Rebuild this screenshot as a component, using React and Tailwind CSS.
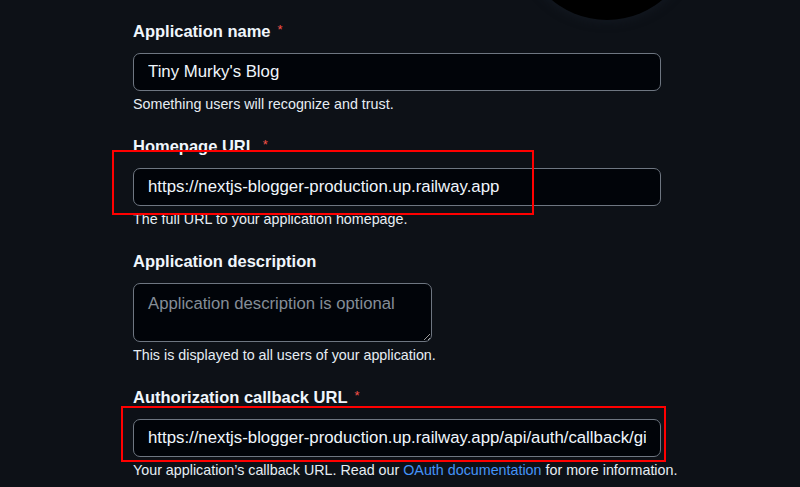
import React from "react";

const fields = [
  {
    label: "Application name",
    required: true,
    value: "Tiny Murky's Blog",
    hint: "Something users will recognize and trust.",
  },
  {
    label: "Homepage URL",
    required: true,
    value: "https://nextjs-blogger-production.up.railway.app",
    hint: "The full URL to your application homepage.",
    mark: "left-[-21px] top-[-18px] w-[422px] h-[65px]",
  },
  {
    label: "Application description",
    textarea: true,
    placeholder: "Application description is optional",
    hint: "This is displayed to all users of your application.",
  },
  {
    label: "Authorization callback URL",
    required: true,
    value: "https://nextjs-blogger-production.up.railway.app/api/auth/callback/github",
    mark: "left-[-12px] top-[-13px] w-[545px] h-[56px]",
  },
];

const Field = ({ f }) => (
  <div className="flex flex-col">
    <label className="h-6 leading-6 text-[16.5px] font-bold text-[#f0f6fc]">
      {f.label}
      {f.required && (
        <span className="relative top-[-3px] ml-[7px] text-[13px] font-normal text-[#f85149]">*</span>
      )}
    </label>

    <div className="relative mt-[10px]">
      {f.textarea ? (
        <textarea
          placeholder={f.placeholder}
          className="block w-[299px] h-[59px] rounded-[7px] border border-[#6e7681] bg-[#010409] px-[14px] py-[8px] text-[16.7px] leading-6 text-[#f0f6fc] placeholder:text-[#848d97] outline-none [color-scheme:dark]"
        />
      ) : (
        <input
          readOnly
          value={f.value}
          className="block w-[528px] h-[38px] rounded-[7px] border border-[#6e7681] bg-[#010409] px-[14px] text-[16.8px] text-[#f0f6fc] outline-none"
        />
      )}
      {f.mark && (
        <div className={`pointer-events-none absolute border-2 border-[#ff0000] ${f.mark}`} />
      )}
    </div>

    <p className="mt-[3px] h-5 leading-5 text-[14.3px] text-[#e6edf3]">
      {f.hint ?? (
        <>
          Your application’s callback URL. Read our{" "}
          <a className="text-[#4493f8]">OAuth documentation</a> for more information.
        </>
      )}
    </p>
  </div>
);

export default function App() {
  return (
    <div className="relative h-[487px] w-[800px] overflow-hidden bg-[#0d1117] font-['Liberation_Sans',Arial,sans-serif]">
      {/* avatar circle peeking from above */}
      <div className="absolute left-[521px] top-[-152px] h-[172px] w-[172px] rounded-full bg-black shadow-[0_0_10px_2px_rgba(20,26,34,0.9)]" />

      <div className="relative flex flex-col gap-5 pl-[133px] pt-[19px]">
        {fields.map((f) => (
          <Field key={f.label} f={f} />
        ))}
      </div>
    </div>
  );
}
